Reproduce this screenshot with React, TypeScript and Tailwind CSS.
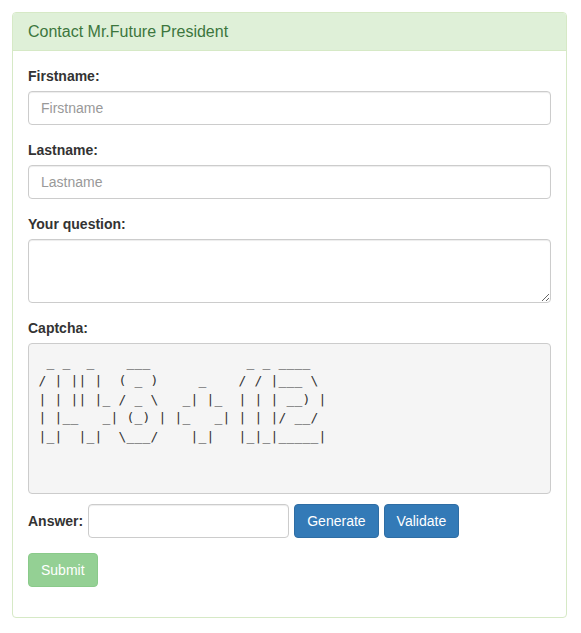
import { useState } from 'react'

const captcha = [
  ' _ _  _    ___            _ _ ____',
  '/ | || |  ( _ )     _    / / |___ \\',
  '| | || |_ / _ \\   _| |_  | | | __) |',
  '| |__   _| (_) | |_   _| | | |/ __/',
  '|_|  |_|  \\___/    |_|   |_|_|_____|',
  '',
  '',
].join('\n')

function Field({ label, placeholder }: { label: string; placeholder: string }) {
  return (
    <div className="mb-[15px]">
      <label className="block font-bold mb-[5px]">{label}</label>
      <input
        type="text"
        placeholder={placeholder}
        className="block w-full h-[34px] px-3 py-[6px] text-[14px] text-[#555] bg-white border border-[#ccc] rounded-[4px] shadow-[inset_0_1px_1px_rgba(0,0,0,0.075)] outline-none placeholder:text-[#999]"
      />
    </div>
  )
}

export default function App() {
  const [answer, setAnswer] = useState('')

  return (
    <div className="font-['Liberation_Sans',Arial,sans-serif] text-[14px] leading-[20px] text-[#333] bg-white min-h-[633px] pt-[12px]">
      <div className="ml-[12px] w-[555px] border border-[#d6e9c6] rounded-[4px] bg-white">
        {/* heading */}
        <div className="bg-[#dff0d8] border-b border-[#d6e9c6] rounded-t-[3px] px-[15px] py-[10px]">
          <h3 className="text-[16px] leading-[17px] text-[#3c763d]">Contact Mr.Future President</h3>
        </div>

        <div className="p-[15px]">
          <Field label="Firstname:" placeholder="Firstname" />
          <Field label="Lastname:" placeholder="Lastname" />

          <div className="mb-[15px]">
            <label className="block font-bold mb-[5px]">Your question:</label>
            <textarea className="block w-full h-[64px] px-3 py-[6px] text-[14px] bg-white border border-[#ccc] rounded-[4px] shadow-[inset_0_1px_1px_rgba(0,0,0,0.075)] outline-none" />
          </div>

          <div>
            <label className="block font-bold mb-[5px]">Captcha:</label>
            <pre className="h-[151px] mb-[10px] p-[9.5px] bg-[#f5f5f5] border border-[#ccc] rounded-[4px] font-['DejaVu_Sans_Mono',Menlo,Consolas,monospace] text-[13px] leading-[18.57px] tracking-[0.17px] text-[#333] overflow-hidden">
              {captcha}
            </pre>
            <div className="flex items-center gap-[5px]">
              <label className="font-bold">Answer:</label>
              <input
                type="text"
                value={answer}
                onChange={(e) => setAnswer(e.target.value)}
                className="w-[201px] h-[34px] px-3 py-[6px] text-[14px] bg-white border border-[#ccc] rounded-[4px] shadow-[inset_0_1px_1px_rgba(0,0,0,0.075)] outline-none"
              />
              <button className="h-[34px] px-3 text-white bg-[#337ab7] border border-[#2e6da4] rounded-[4px]">Generate</button>
              <button className="h-[34px] px-3 text-white bg-[#337ab7] border border-[#2e6da4] rounded-[4px]">Validate</button>
            </div>
          </div>

          <div className="mt-[15px] mb-[15px]">
            <button disabled className="h-[34px] px-3 text-white bg-[#5cb85c] border border-[#4cae4c] rounded-[4px] opacity-65">
              Submit
            </button>
          </div>
        </div>
      </div>
    </div>
  )
}
